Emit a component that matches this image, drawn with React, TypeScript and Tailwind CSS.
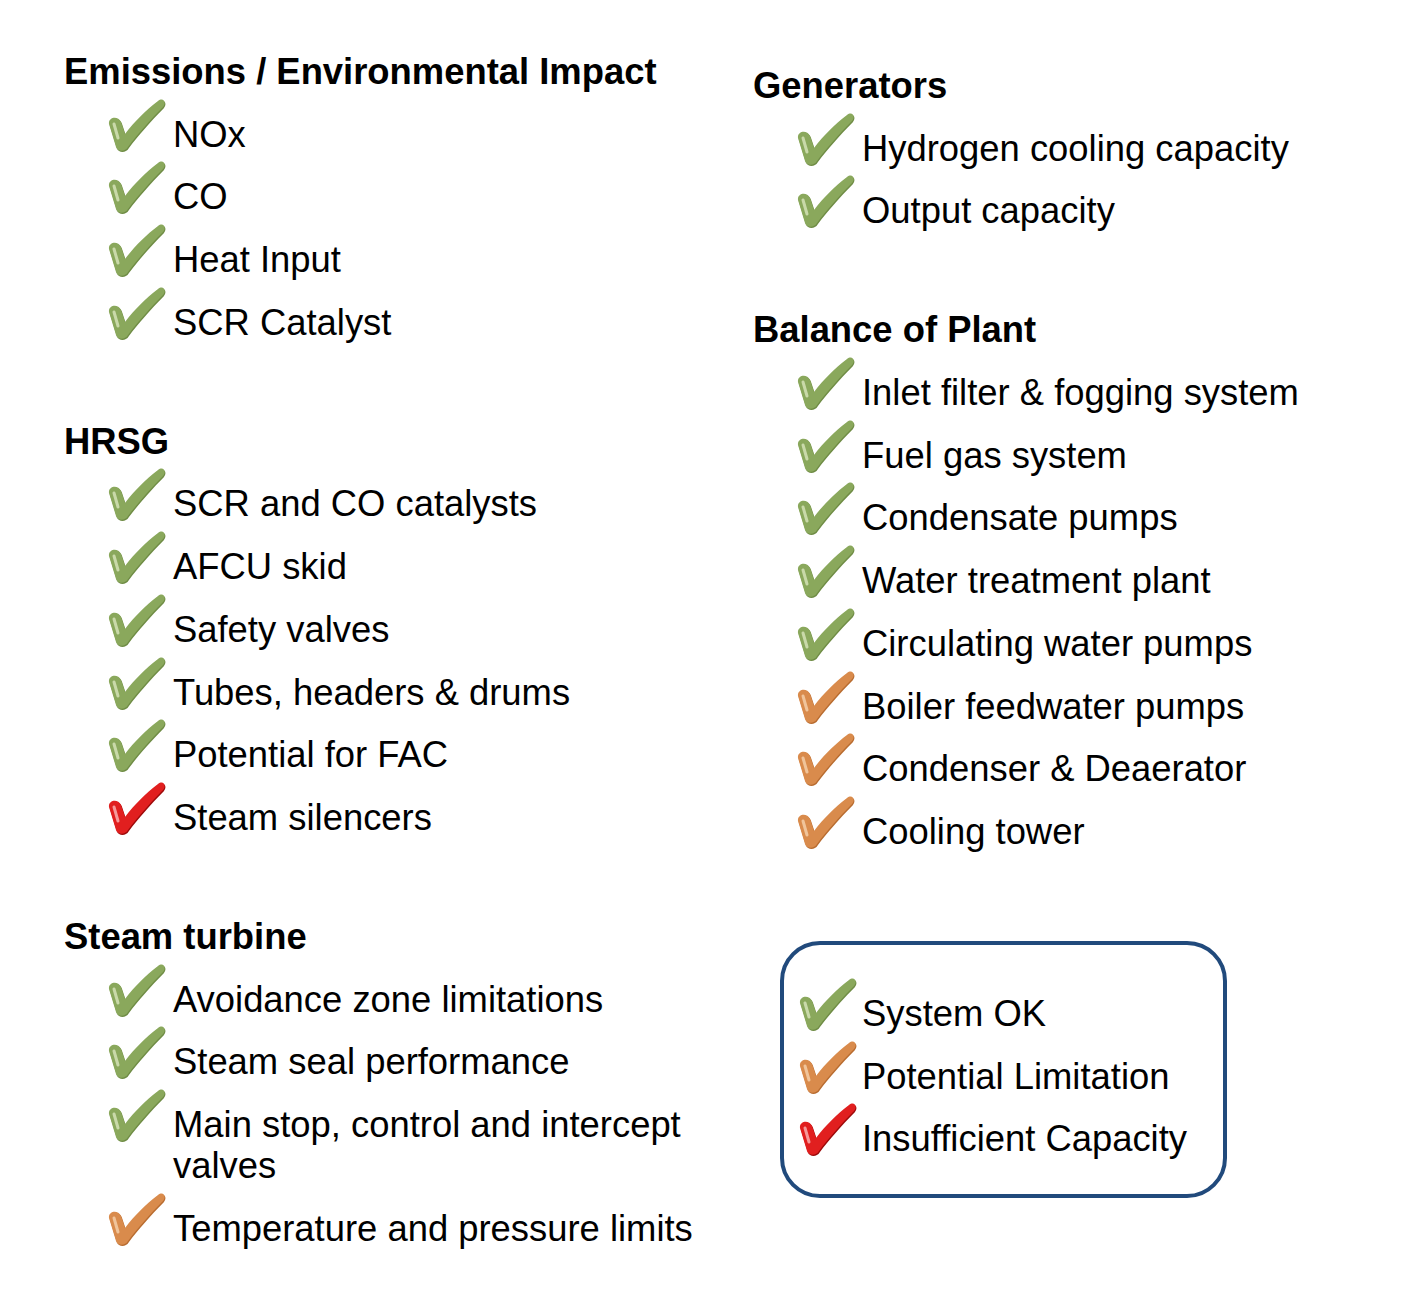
import React from "react";

type Status = "ok" | "warn" | "bad";

const palette: Record<Status, { fill: string; light: string; dark: string }> = {
  ok: { fill: "#8aa85c", light: "#c9d9a9", dark: "#6f8c45" },
  warn: { fill: "#d98b4c", light: "#f0c49a", dark: "#b86c30" },
  bad: { fill: "#e11f1f", light: "#f59a9a", dark: "#9c0a0a" },
};

function Check({ status }: { status: Status }) {
  const c = palette[status];
  return (
    <svg viewBox="0 0 60 56" className="w-[60px] h-[56px] shrink-0 -mt-[17px]">
      <path
        d="M3,27 C2,20 12,18 15,25 L19,37 C28,25 40,13 52,4 C57,0 61,5 57,10 C44,23 31,38 22,50 C19,55 12,55 10,50 Z"
        fill={c.dark}
        transform="translate(0.8,1.2)"
      />
      <path
        d="M3,27 C2,20 12,18 15,25 L19,37 C28,25 40,13 52,4 C57,0 61,5 57,10 C44,23 31,38 22,50 C19,55 12,55 10,50 Z"
        fill={c.fill}
      />
      <path d="M8,27 L12,41" stroke={c.light} strokeWidth="3" strokeLinecap="round" fill="none" />
    </svg>
  );
}

function Item({ status, children }: { status: Status; children: React.ReactNode }) {
  return (
    <div className="flex items-start ml-[42px]">
      <Check status={status} />
      <span className="ml-[7px] max-w-[560px]">{children}</span>
    </div>
  );
}

function Section({
  title,
  items,
}: {
  title: string;
  items: [Status, string][];
}) {
  return (
    <div className="flex flex-col gap-[21.7px]">
      <h2 className="font-bold">{title}</h2>
      {items.map(([s, t]) => (
        <Item key={t} status={s}>
          {t}
        </Item>
      ))}
    </div>
  );
}

export default function App() {
  return (
    <div
      className="w-[1406px] h-[1314px] bg-white text-black text-[36.4px] leading-[41px] flex"
      style={{ fontFamily: '"Liberation Sans", Arial, sans-serif' }}
    >
      {/* left column */}
      <div className="w-[689px] ml-[64px] pt-[51px] flex flex-col gap-[78px]">
        <Section
          title="Emissions / Environmental Impact"
          items={[
            ["ok", "NOx"],
            ["ok", "CO"],
            ["ok", "Heat Input"],
            ["ok", "SCR Catalyst"],
          ]}
        />
        <Section
          title="HRSG"
          items={[
            ["ok", "SCR and CO catalysts"],
            ["ok", "AFCU skid"],
            ["ok", "Safety valves"],
            ["ok", "Tubes, headers & drums"],
            ["ok", "Potential for FAC"],
            ["bad", "Steam silencers"],
          ]}
        />
        <Section
          title="Steam turbine"
          items={[
            ["ok", "Avoidance zone limitations"],
            ["ok", "Steam seal performance"],
            ["ok", "Main stop, control and intercept valves"],
            ["warn", "Temperature and pressure limits"],
          ]}
        />
      </div>

      {/* right column */}
      <div className="flex-1 pt-[65px] flex flex-col gap-[78px]">
        <Section
          title="Generators"
          items={[
            ["ok", "Hydrogen cooling capacity"],
            ["ok", "Output capacity"],
          ]}
        />
        <Section
          title="Balance of Plant"
          items={[
            ["ok", "Inlet filter & fogging system"],
            ["ok", "Fuel gas system"],
            ["ok", "Condensate pumps"],
            ["ok", "Water treatment plant"],
            ["ok", "Circulating water pumps"],
            ["warn", "Boiler feedwater pumps"],
            ["warn", "Condenser & Deaerator"],
            ["warn", "Cooling tower"],
          ]}
        />

        {/* legend */}
        <div className="ml-[27px] mt-[11px] w-[447px] h-[257px] border-[4px] border-[#214a7c] rounded-[40px] pt-[48px] pl-[13px] flex flex-col gap-[21.7px]">
          {(
            [
              ["ok", "System OK"],
              ["warn", "Potential Limitation"],
              ["bad", "Insufficient Capacity"],
            ] as [Status, string][]
          ).map(([s, t]) => (
            <div key={t} className="flex items-start">
              <Check status={s} />
              <span className="ml-[5px]">{t}</span>
            </div>
          ))}
        </div>
      </div>
    </div>
  );
}
